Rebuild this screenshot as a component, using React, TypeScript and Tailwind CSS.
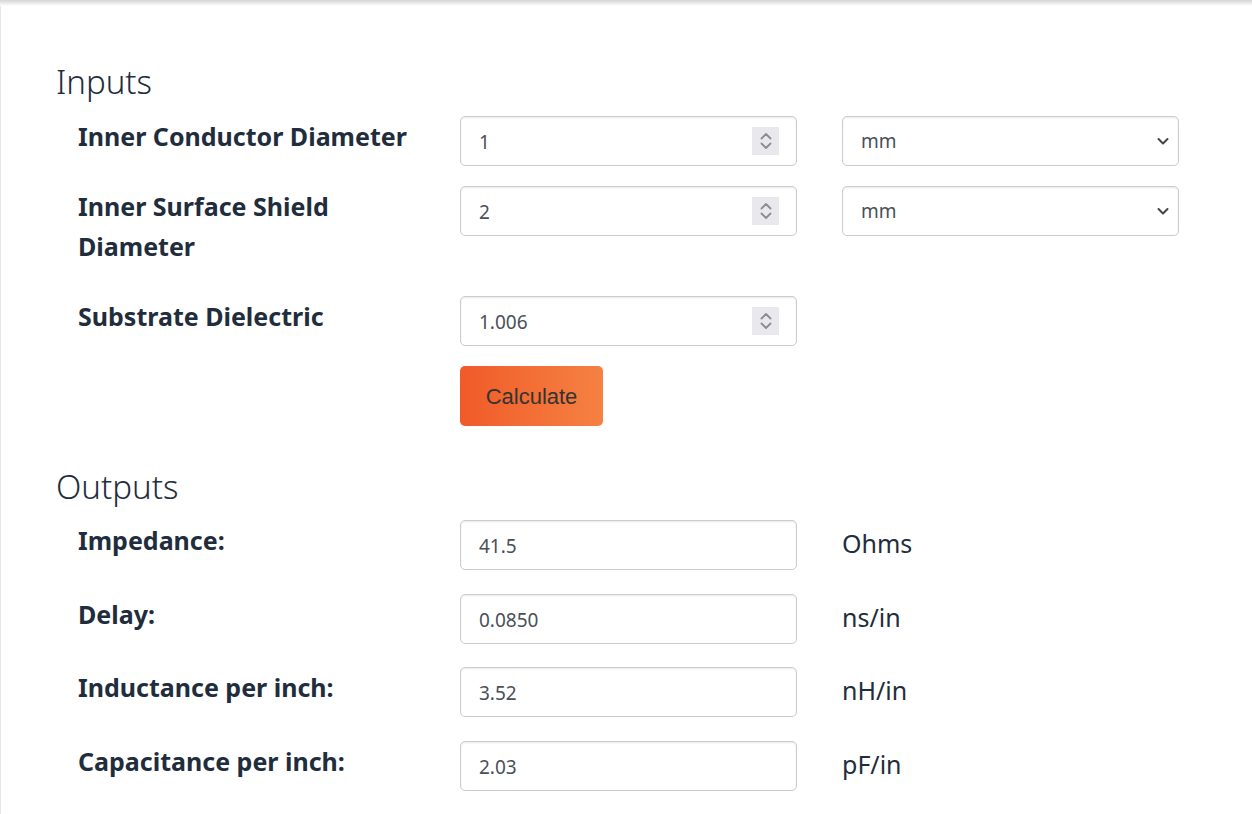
import React from 'react';

const font = { fontFamily: '"Noto Sans", "Open Sans", "DejaVu Sans", sans-serif' };

function Spinner() {
  return (
    <div className="pointer-events-none absolute right-[18px] top-1/2 flex h-[28px] w-[27px] -translate-y-1/2 items-center justify-center bg-[#e9e9ed]">
      <svg width="16" height="22" viewBox="0 0 16 22" fill="none" stroke="#8b8b98" strokeWidth="1.8" strokeLinecap="round" strokeLinejoin="round">
        <path d="M3.5 8.5 L8 4 L12.5 8.5" />
        <path d="M3.5 13.5 L8 18 L12.5 13.5" />
      </svg>
    </div>
  );
}

function TextBox({ value, spinner = false }: { value: string; spinner?: boolean }) {
  return (
    <div className="relative w-[337px] shrink-0">
      <input
        type="text"
        defaultValue={value}
        readOnly
        className="h-[50px] w-full rounded-[5px] border border-[#cccccc] bg-white pl-[18px] pr-12 pt-[2px] text-[19px] text-[#495057] shadow-[inset_0_1px_2px_rgba(0,0,0,0.09)] outline-none"
        style={font}
      />
      {spinner && <Spinner />}
    </div>
  );
}

function UnitSelect() {
  return (
    <div className="relative w-[337px] shrink-0">
      <select
        defaultValue="mm"
        className="h-[50px] w-full appearance-none rounded-[5px] border border-[#cccccc] bg-white pl-[18px] text-[19px] text-[#495057] shadow-[inset_0_1px_2px_rgba(0,0,0,0.09)] outline-none"
        style={font}
      >
        <option value="mm">mm</option>
        <option value="mil">mil</option>
        <option value="in">in</option>
      </select>
      <svg className="pointer-events-none absolute right-[9px] top-1/2 -translate-y-1/2" width="14" height="10" viewBox="0 0 14 10" fill="none" stroke="#444" strokeWidth="2" strokeLinecap="round" strokeLinejoin="round">
        <path d="M2.5 3 L7 7.5 L11.5 3" />
      </svg>
    </div>
  );
}

function Label({ children }: { children: React.ReactNode }) {
  return (
    <div className="w-[382px] shrink-0 pb-[10px] pr-6 text-[25px] font-bold leading-[40px] text-[#1f2d3d]">
      {children}
    </div>
  );
}

const outputs = [
  { label: 'Impedance:', value: '41.5', unit: 'Ohms' },
  { label: 'Delay:', value: '0.0850', unit: 'ns/in' },
  { label: 'Inductance per inch:', value: '3.52', unit: 'nH/in' },
  { label: 'Capacitance per inch:', value: '2.03', unit: 'pF/in' },
];

export default function App() {
  return (
    <div className="min-h-[814px] w-full bg-white shadow-[inset_1px_0_0_#e6e6e6]" style={font}>
      <div className="h-[6px] w-full bg-gradient-to-b from-[#d4d4d4] to-white" />
      <div className="pl-[56px] pt-[54px]">
        <h3 className="text-[33px] font-light leading-[44px] text-[#1f2d3d]">Inputs</h3>

        <div className="mt-[12px] flex flex-col gap-5 pl-[22px]">
          <div className="flex items-start">
            <Label>Inner Conductor Diameter</Label>
            <TextBox value="1" spinner />
            <div className="w-[45px] shrink-0" />
            <UnitSelect />
          </div>
          <div className="flex items-start">
            <Label>Inner Surface Shield Diameter</Label>
            <TextBox value="2" spinner />
            <div className="w-[45px] shrink-0" />
            <UnitSelect />
          </div>
          <div className="flex items-start">
            <Label>Substrate Dielectric</Label>
            <TextBox value="1.006" spinner />
          </div>
          <div className="flex">
            <div className="w-[382px] shrink-0" />
            <button
              type="button"
              className="h-[60px] w-[143px] rounded-[5px] bg-gradient-to-r from-[#f05a28] to-[#f58142] text-[22px] text-[#333333]"
              style={{ fontFamily: '"Liberation Sans", Arial, sans-serif' }}
            >
              Calculate
            </button>
          </div>
        </div>

        <h3 className="mt-[39px] text-[33px] font-light leading-[44px] text-[#1f2d3d]">Outputs</h3>

        <div className="mt-[11px] flex flex-col gap-[23.67px] pl-[22px]">
          {outputs.map((o) => (
            <div key={o.label} className="flex items-start">
              <Label>{o.label}</Label>
              <TextBox value={o.value} />
              <div className="w-[45px] shrink-0" />
              <div className="pt-[3px] text-[25px] leading-[40px] text-[#1f2d3d]">{o.unit}</div>
            </div>
          ))}
        </div>
      </div>
    </div>
  );
}
